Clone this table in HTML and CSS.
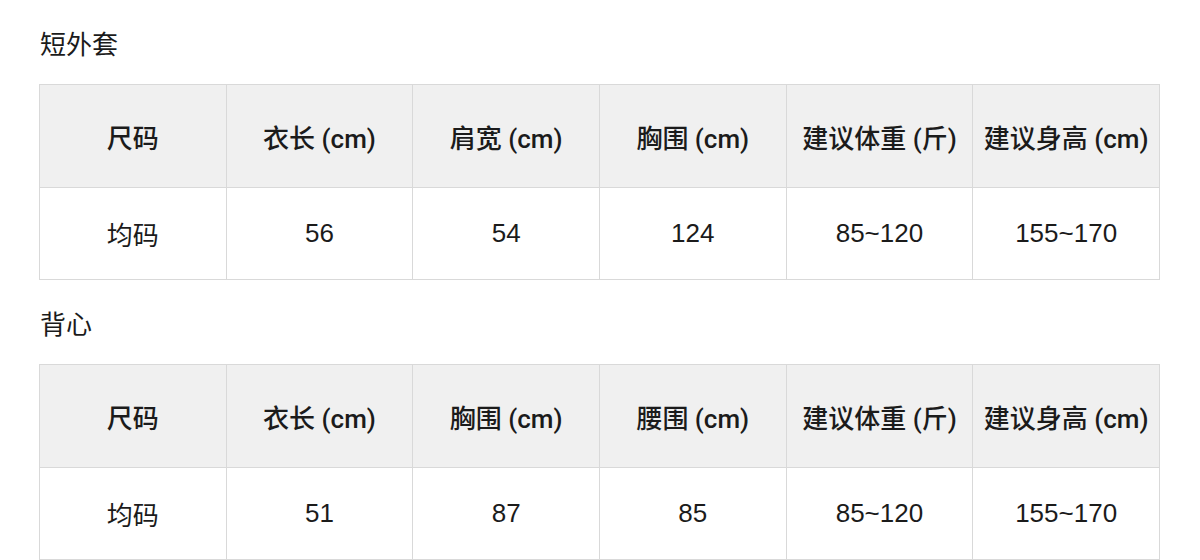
FILE: index.html
```html
<!DOCTYPE html>
<html lang="zh-CN">
<head>
<meta charset="utf-8">
<link rel="stylesheet" href="styles.css">
</head>
<body>
<div class="page">
  <section class="section">
    <h2 class="title">短外套</h2>
    <table class="size-table">
      <thead>
        <tr><th>尺码</th><th>衣长 (cm)</th><th>肩宽 (cm)</th><th>胸围 (cm)</th><th>建议体重 (斤)</th><th>建议身高 (cm)</th></tr>
      </thead>
      <tbody>
        <tr><td>均码</td><td>56</td><td>54</td><td>124</td><td>85~120</td><td>155~170</td></tr>
      </tbody>
    </table>
  </section>
  <section class="section">
    <h2 class="title">背心</h2>
    <table class="size-table">
      <thead>
        <tr><th>尺码</th><th>衣长 (cm)</th><th>胸围 (cm)</th><th>腰围 (cm)</th><th>建议体重 (斤)</th><th>建议身高 (cm)</th></tr>
      </thead>
      <tbody>
        <tr><td>均码</td><td>51</td><td>87</td><td>85</td><td>85~120</td><td>155~170</td></tr>
      </tbody>
    </table>
  </section>
</div>
</body>
</html>
```
FILE: styles.css
```css
html, body {
  margin: 0;
  padding: 0;
  background: #ffffff;
}
body {
  font-family: "Liberation Sans", "Noto Sans CJK SC", sans-serif;
  color: #1b1b1b;
}
.page {
  padding: 0 40px 0 39px;
}
.title {
  margin: 0;
  height: 84px;
  display: flex;
  align-items: center;
  padding-left: 1px;
  font-size: 26px;
  font-weight: 400;
}
.size-table {
  width: 1121px;
  border-collapse: collapse;
  table-layout: fixed;
}
.size-table th,
.size-table td {
  border: 1px solid #d9d9d9;
  text-align: center;
  font-size: 26px;
  padding: 0;
}
.size-table th {
  background: #f0f0f0;
  height: 102px;
  font-family: "Roboto", "Noto Sans CJK SC", sans-serif;
  font-weight: 500;
}
.size-table td {
  height: 91px;
  font-weight: 400;
}
```
